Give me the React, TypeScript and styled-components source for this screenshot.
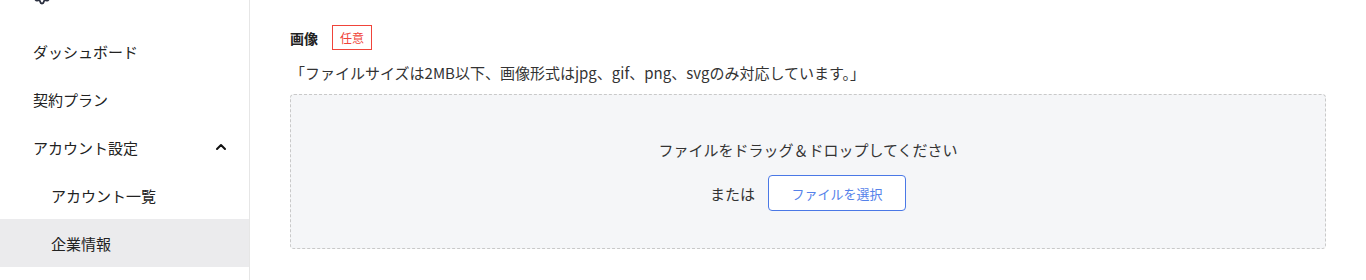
import styled, { createGlobalStyle } from "styled-components";
import { Settings, ChevronUp } from "lucide-react";

const Global = createGlobalStyle`
  html, body {
    margin: 0;
    padding: 0;
    background: #fff;
  }
  body {
    font-family: "Noto Sans CJK JP", "Noto Sans", sans-serif;
    color: #333;
  }
`;

const Layout = styled.div`
  display: flex;
  height: 280px;
  overflow: hidden;
`;

const Sidebar = styled.nav`
  width: 249px;
  flex-shrink: 0;
  border-right: 1px solid #e6e6e6;
  display: flex;
  flex-direction: column;
`;

const SideTop = styled.div`
  height: 27px;
  overflow: hidden;
  padding-left: 33px;
  color: #2b3040;
`;

const TopIcon = styled.div`
  margin-top: -14px;
  width: 18px;
  height: 18px;
`;

const MenuItem = styled.div<{ $sub?: boolean; $active?: boolean }>`
  height: 48px;
  display: flex;
  align-items: center;
  justify-content: space-between;
  padding: 0 20px 0 ${(p) => (p.$sub ? "51px" : "33px")};
  font-size: 15px;
  color: #222;
  background: ${(p) => (p.$active ? "#ebebed" : "transparent")};
`;

const Main = styled.main`
  flex: 1;
  padding: 25px 40px 0 40px;
`;

const LabelRow = styled.div`
  display: flex;
  align-items: center;
  gap: 14px;
  margin-bottom: 12px;
`;

const Label = styled.span`
  font-size: 14px;
  font-weight: 700;
  color: #222;
`;

const Tag = styled.span`
  box-sizing: border-box;
  height: 25px;
  padding: 0 7px;
  display: inline-flex;
  align-items: center;
  border: 1px solid #f0443a;
  color: #f0443a;
  font-size: 12px;
`;

const Note = styled.p`
  margin: 0 0 10px 0;
  font-size: 15px;
  line-height: 22px;
  color: #333;
`;

const DropZone = styled.div`
  box-sizing: border-box;
  height: 155px;
  border: 1px dashed #c9c9c9;
  border-radius: 4px;
  background: #f5f6f8;
  padding: 43px 0 37px;
  display: flex;
  flex-direction: column;
  align-items: center;
  gap: 13px;
`;

const DropText = styled.div`
  font-size: 15px;
  line-height: 24px;
  color: #333;
`;

const ChooseRow = styled.div`
  display: flex;
  align-items: center;
  gap: 13px;
  font-size: 15px;
  color: #333;
`;

const ChooseButton = styled.button`
  box-sizing: border-box;
  width: 138px;
  height: 36px;
  border: 1px solid #4a78e6;
  border-radius: 4px;
  background: #fff;
  color: #5582ea;
  font-family: inherit;
  font-size: 13px;
  cursor: pointer;
`;

export default function App() {
  return (
    <>
      <Global />
      <Layout>
        <Sidebar>
          <SideTop>
            <TopIcon>
              <Settings size={18} strokeWidth={2.4} />
            </TopIcon>
          </SideTop>
          <MenuItem>ダッシュボード</MenuItem>
          <MenuItem>契約プラン</MenuItem>
          <MenuItem>
            アカウント設定
            <ChevronUp size={16} strokeWidth={3} color="#111" />
          </MenuItem>
          <MenuItem $sub>アカウント一覧</MenuItem>
          <MenuItem $sub $active>
            企業情報
          </MenuItem>
        </Sidebar>
        <Main>
          <LabelRow>
            <Label>画像</Label>
            <Tag>任意</Tag>
          </LabelRow>
          <Note>「ファイルサイズは2MB以下、画像形式はjpg、gif、png、svgのみ対応しています。」</Note>
          <DropZone>
            <DropText>ファイルをドラッグ＆ドロップしてください</DropText>
            <ChooseRow>
              または
              <ChooseButton>ファイルを選択</ChooseButton>
            </ChooseRow>
          </DropZone>
        </Main>
      </Layout>
    </>
  );
}
